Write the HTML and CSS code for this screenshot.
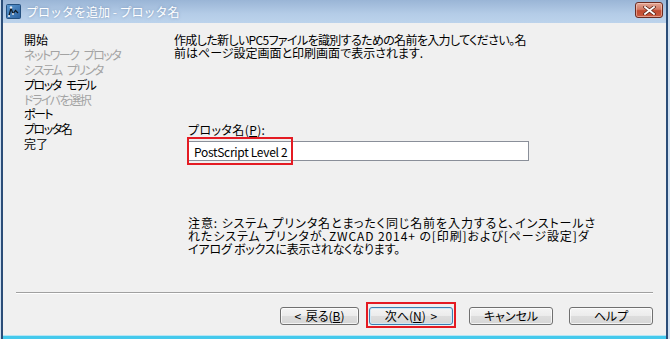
FILE: index.html
```html
<!DOCTYPE html>
<html lang="ja">
<head>
<meta charset="utf-8">
<title>プロッタを追加 - プロッタ名</title>
<link rel="stylesheet" href="styles.css">
</head>
<body>
<div class="window">
  <div class="titlebar">
    <svg class="app-icon" width="15" height="15" viewBox="0 0 15 15">
      <defs>
        <linearGradient id="ig" x1="0" y1="0" x2="1" y2="1">
          <stop offset="0" stop-color="#5d9ad2"/>
          <stop offset="1" stop-color="#2c62a0"/>
        </linearGradient>
      </defs>
      <rect x="0.5" y="0.5" width="14" height="14" rx="1" fill="url(#ig)" stroke="#24507f"/>
      <path d="M3 12 L5 4 M5 4 L7 10 L9.5 6.5 L12 9" fill="none" stroke="#101820" stroke-width="1.2"/>
      <circle cx="5" cy="3.5" r="1.2" fill="#e8f0f8"/>
      <circle cx="3" cy="12" r="1.1" fill="#e8f0f8"/>
      <circle cx="7" cy="10" r="1" fill="#e8f0f8"/>
    </svg>
    <span class="title-text">プロッタを追加 - プロッタ名</span>
    <button class="close-btn" aria-label="閉じる">
      <svg width="13" height="9" viewBox="0 0 13 9">
        <path d="M2 1 L11 8 M11 1 L2 8" stroke="#5a2418" stroke-width="3.4" stroke-linecap="square"/>
        <path d="M2 1 L11 8 M11 1 L2 8" stroke="#ffffff" stroke-width="1.8" stroke-linecap="square"/>
      </svg>
    </button>
  </div>
  <div class="main">
    <ul class="nav">
      <li class="kanji">開始</li>
      <li class="off">ネットワーク プロッタ</li>
      <li class="off">システム プリンタ</li>
      <li>プロッタ モデル</li>
      <li class="off">ドライバを選択</li>
      <li>ポート</li>
      <li>プロッタ名</li>
      <li class="kanji">完了</li>
    </ul>
    <div class="content">
      <p class="intro"><span class="line tight">作成した新しいPC5ファイルを識別するための名前を入力してください。名</span><span class="line">前はページ設定画面と印刷画面で表示されます.</span></p>
      <div class="field">
        <label class="field-label" for="pname">プロッタ名(<u>P</u>):</label>
        <div class="input-wrap">
          <input id="pname" class="text-input" type="text" value="PostScript Level 2">
          <span class="mark mark-input"></span>
        </div>
      </div>
      <p class="note"><span class="line wide">注意: システム プリンタ名とまったく同じ名前を入力すると、インストールさ</span><span class="line wide">れたシステム プリンタが、ZWCAD 2014+ の[印刷]および[ページ設定]ダ</span><span class="line">イアログ ボックスに表示されなくなります。</span></p>
    </div>
  </div>
  <div class="footer">
    <div class="separator"></div>
    <div class="buttons">
      <button class="btn btn-back">&lt; 戻る(<u>B</u>)</button>
      <span class="btn-wrap">
        <button class="btn btn-default">次へ(<u>N</u>) &gt;</button>
        <span class="mark mark-btn"></span>
      </span>
      <button class="btn">キャンセル</button>
      <button class="btn">ヘルプ</button>
    </div>
  </div>
  <div class="frame-bottom"></div>
</div>
</body>
</html>
```

FILE: styles.css
```css
* { box-sizing: border-box; }
html, body {
  margin: 0;
  padding: 0;
  width: 670px;
  height: 339px;
  overflow: hidden;
  background: #cfe0f1;
}
body {
  font-family: "Noto Sans CJK JP", "Noto Sans", sans-serif;
  font-size: 12px;
  font-feature-settings: "palt" 1;
  color: #000;
}
.window {
  width: 667px;
  height: 339px;
  margin-left: 1px;
  display: flex;
  flex-direction: column;
  border-left: 2px solid #2b4d78;
  border-right: 2px solid #2b4d78;
  background: #f0f0f0;
}
.titlebar {
  height: 23px;
  flex: none;
  display: flex;
  align-items: center;
  padding-left: 3px;
  padding-right: 3px;
  background: linear-gradient(#9ab5d6, #b4cce7 60%, #bcd3ec);
}
.app-icon { flex: none; }
.title-text {
  margin-left: 5px;
  color: #ffffff;
  font-size: 12px;
  font-feature-settings: normal;
  text-shadow: 0 0 3px rgba(80, 110, 150, 0.6);
  flex: 1;
}
.close-btn {
  width: 28px;
  height: 16px;
  padding: 0;
  margin: 0 0 3px 0;
  border: 1px solid #6b2b21;
  border-radius: 3px;
  background: linear-gradient(#e2a897, #d37a65 45%, #c04a30 55%, #c95a3f);
  display: flex;
  align-items: center;
  justify-content: center;
  box-shadow: inset 0 0 0 1px rgba(255, 220, 210, 0.5);
}
.main {
  height: 269px;
  flex: none;
  display: flex;
  padding-top: 10px;
}
.nav {
  list-style: none;
  margin: 0;
  padding: 0 0 0 21px;
  width: 171px;
  flex: none;
}
.nav li {
  line-height: 14.9px;
  height: 14.9px;
  white-space: nowrap;
  letter-spacing: -1.5px;
  word-spacing: 4px;
}
.nav li.kanji { letter-spacing: 0; }
.nav li.off { color: #a3a3a3; }
.content { flex: 1; }
.intro, .note {
  margin: 0;
  line-height: 13px;
  white-space: nowrap;
}
.line { display: block; height: 13px; }
.intro .tight { letter-spacing: -0.64px; }
.note .wide { letter-spacing: 0.9px; }
.note .line:last-child { letter-spacing: -0.2px; }
.field {
  margin: 64px 0 0 14px;
}
.field-label {
  display: block;
  line-height: 13px;
  height: 13px;
  letter-spacing: 0.4px;
  margin-top: 1px;
}
.input-wrap {
  position: relative;
  margin-top: 5px;
  width: 341px;
}
.text-input {
  display: block;
  width: 341px;
  height: 20px;
  margin: 0;
  padding: 0 0 0 5px;
  border: 1px solid #8a8f99;
  background: #ffffff;
  font-family: "Noto Sans CJK JP", "Noto Sans", sans-serif;
  font-size: 12px;
  letter-spacing: -0.3px;
  color: #000;
  outline: none;
}
.mark {
  position: absolute;
  border: 2px solid #e41b23;
  pointer-events: none;
}
.mark-input {
  left: -1px;
  top: -4px;
  width: 106px;
  height: 28px;
}
.note {
  margin: 55px 0 0 14px;
}
.footer {
  flex: 1;
  display: flex;
  flex-direction: column;
}
.separator {
  margin: 0 13px 0 13px;
  height: 2px;
  border-top: 1px solid #a0a0a0;
  border-bottom: 1px solid #ffffff;
}
.buttons {
  display: flex;
  justify-content: flex-end;
  align-items: flex-start;
  gap: 16px;
  padding: 13px 13px 0 0;
}
.btn {
  width: 84px;
  height: 18px;
  padding: 0;
  margin: 0;
  border: 1px solid #707070;
  border-radius: 3px;
  background: linear-gradient(#f4f4f4, #ececec 48%, #dddddd 52%, #d6d6d6);
  font-family: "Noto Sans CJK JP", "Noto Sans", sans-serif;
  font-size: 12px;
  font-feature-settings: "palt" 1;
  line-height: 16px;
  word-spacing: 2px;
  color: #000;
  box-shadow: inset 0 0 0 1px rgba(255, 255, 255, 0.7);
}
.btn-back { width: 79px; margin-right: -6px; }
.btn-wrap { position: relative; display: block; height: 18px; }
.btn-default {
  border-color: #3c7fb1;
  box-shadow: inset 0 0 0 1px #cfe8f6;
}
.mark-btn {
  left: -3px;
  top: -5px;
  width: 90px;
  height: 26px;
}
.frame-bottom {
  height: 4px;
  flex: none;
  background: linear-gradient(#b4e6f6 0 25%, #44c9ec 25% 100%);
}
```
